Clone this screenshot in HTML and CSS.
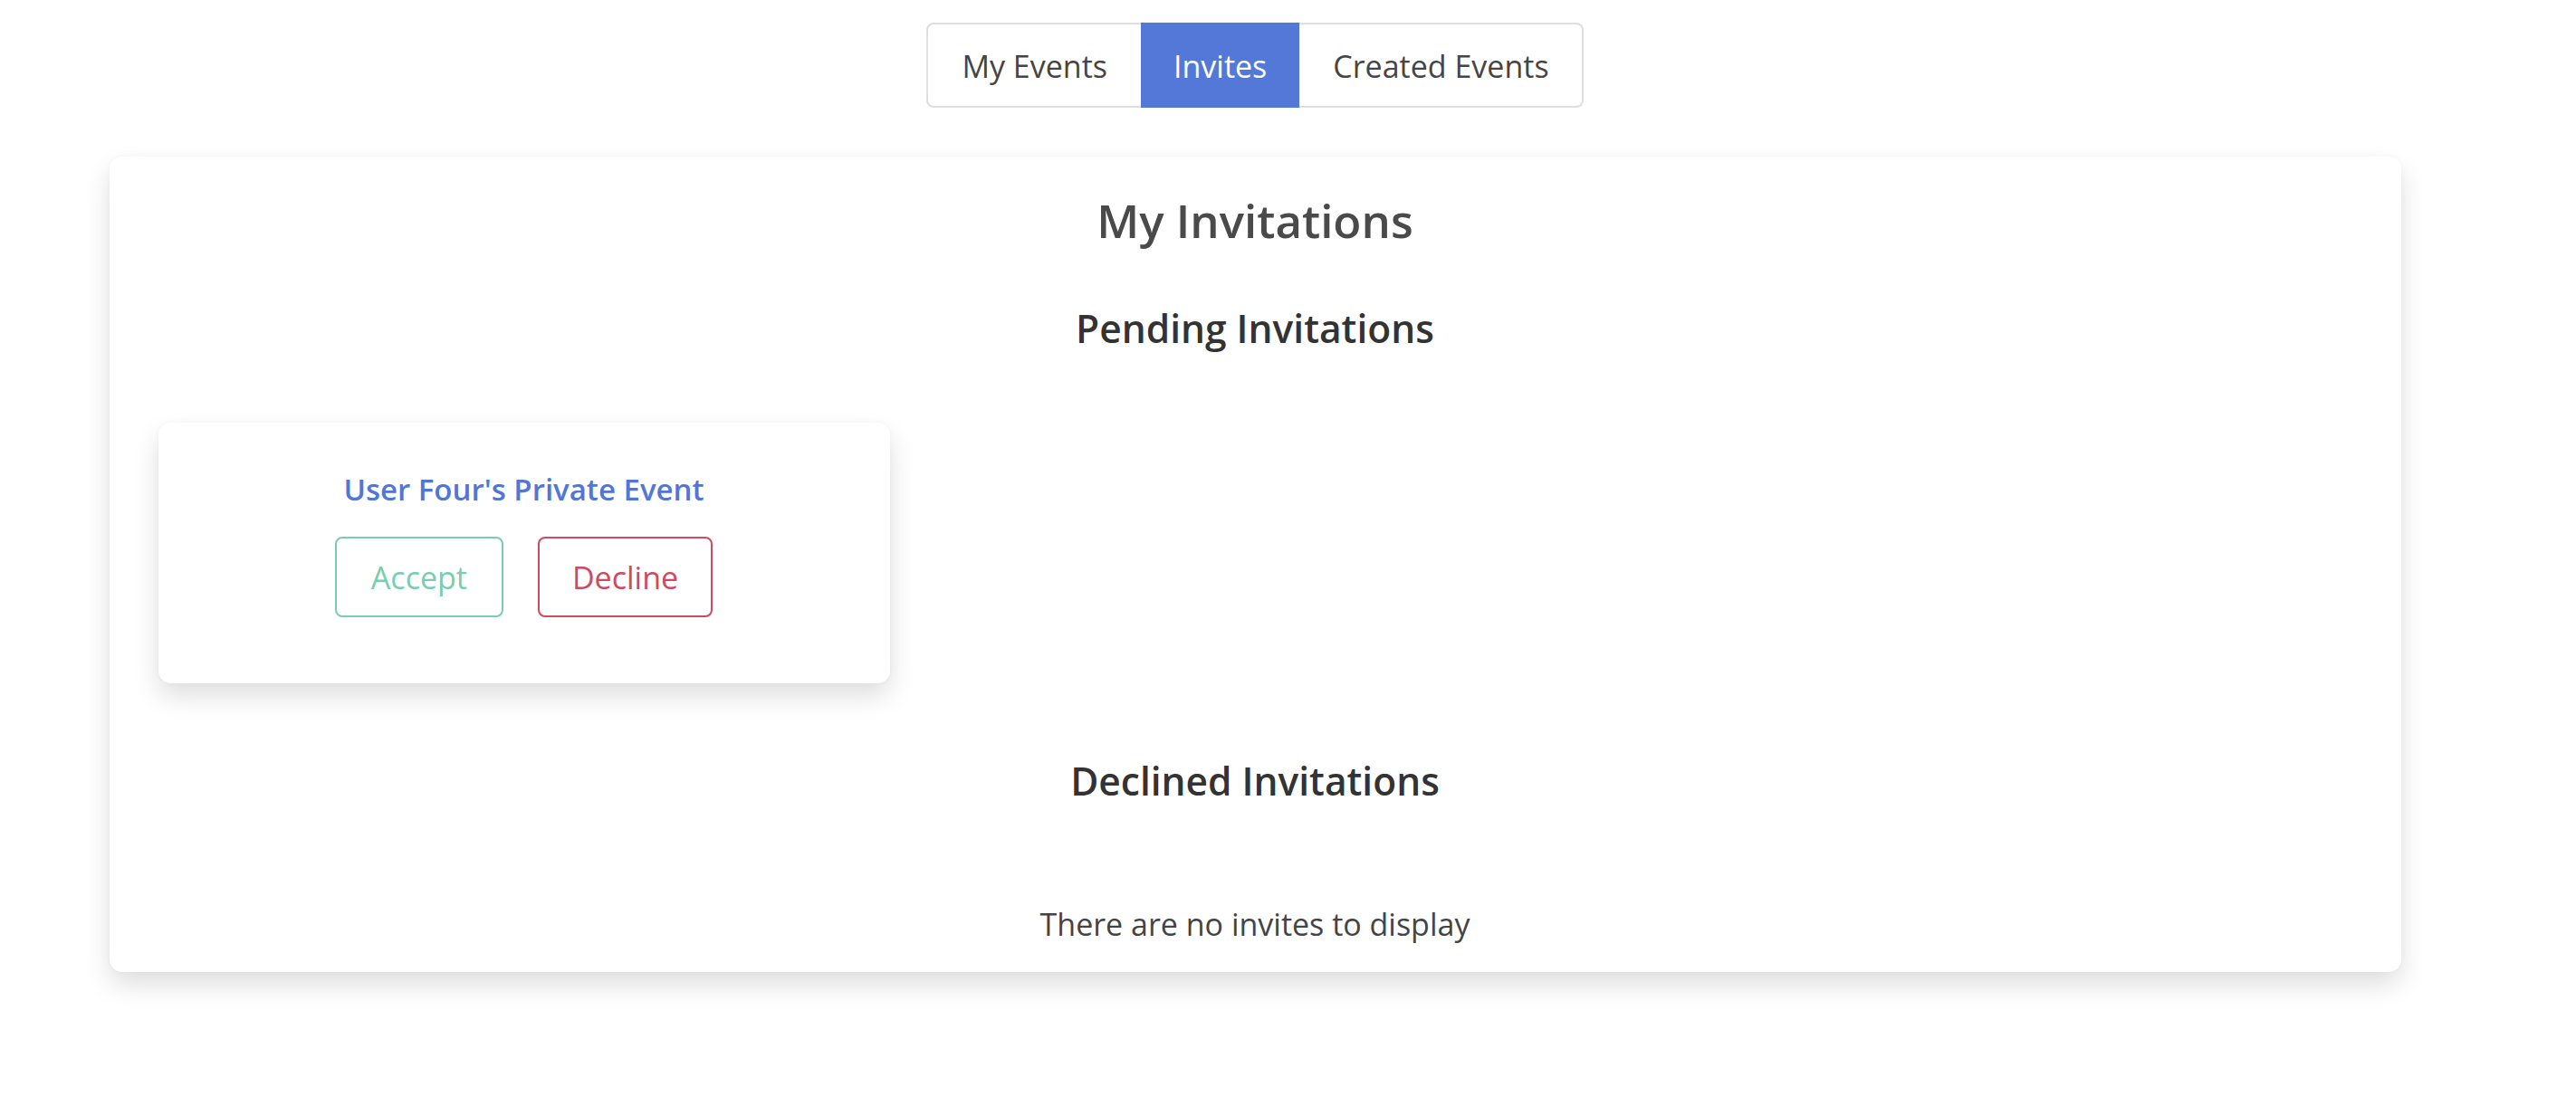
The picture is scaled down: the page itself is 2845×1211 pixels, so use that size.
FILE: index.html
```html
<!DOCTYPE html>
<html lang="en">
<head>
<meta charset="utf-8">
<title>My Invitations</title>
<link rel="stylesheet" href="styles.css">
</head>
<body>
<div class="page">
  <nav class="tabs">
    <button class="tab tab-first">My Events</button>
    <button class="tab tab-active">Invites</button>
    <button class="tab tab-last">Created Events</button>
  </nav>
  <main class="panel">
    <h1 class="panel-title">My Invitations</h1>
    <h2 class="section-title">Pending Invitations</h2>
    <div class="invite-list">
      <div class="invite-card">
        <div class="invite-name">User Four's Private Event</div>
        <div class="invite-actions">
          <button class="btn btn-accept">Accept</button>
          <button class="btn btn-decline">Decline</button>
        </div>
      </div>
    </div>
    <h2 class="section-title section-declined">Declined Invitations</h2>
    <p class="empty">There are no invites to display</p>
  </main>
</div>
</body>
</html>
```
FILE: styles.css
```css
* { box-sizing: border-box; }
html, body { margin: 0; padding: 0; background: #ffffff; }
body {
  font-family: "Open Sans", "Noto Sans", sans-serif;
  color: #444444;
}
.page {
  width: 2772px;
  padding-top: 25px;
  padding-bottom: 80px;
  display: flex;
  flex-direction: column;
  align-items: center;
}
.tabs {
  display: flex;
}
.tab {
  font-family: inherit;
  font-size: 34px;
  line-height: 50px;
  padding: 21px 37px 19px;
  color: #454545;
  background: #ffffff;
  border: 2px solid #dedede;
  border-left: none;
  border-right: none;
  margin: 0;
}
.tab-first {
  border-left: 2px solid #dedede;
  border-radius: 8px 0 0 8px;
}
.tab-last {
  border-right: 2px solid #dedede;
  border-radius: 0 8px 8px 0;
  padding-right: 36px;
}
.tab-active {
  background: #5478d7;
  border-color: #5478d7;
  color: #ffffff;
  padding: 21px 36px 19px;
}
.panel {
  width: 2531px;
  margin-top: 54px;
  background: #ffffff;
  border-radius: 14px;
  box-shadow: 0 14px 29px rgba(0, 0, 0, 0.13), 0 0 6px rgba(0, 0, 0, 0.03);
  padding: 38px 54px 27px;
  display: flex;
  flex-direction: column;
  align-items: center;
}
.panel-title {
  margin: 0;
  font-size: 51px;
  line-height: 64px;
  font-weight: 600;
  color: #4a4a4a;
}
.section-title {
  margin: 62px 0 0;
  font-size: 42.5px;
  line-height: 52px;
  font-weight: 600;
  color: #333333;
}
.section-declined {
  margin-top: 82px;
}
.invite-list {
  align-self: stretch;
  margin-top: 78px;
  display: flex;
}
.invite-card {
  width: 808px;
  background: #ffffff;
  border-radius: 14px;
  box-shadow: 0 14px 29px rgba(0, 0, 0, 0.13), 0 0 6px rgba(0, 0, 0, 0.03);
  padding: 54px 20px 73px;
  display: flex;
  flex-direction: column;
  align-items: center;
}
.invite-name {
  font-size: 33px;
  line-height: 40px;
  font-weight: 600;
  color: #5176d8;
}
.invite-actions {
  margin-top: 32px;
  display: flex;
  gap: 38px;
}
.btn {
  font-family: inherit;
  font-size: 34px;
  line-height: 53px;
  padding: 17px 38px 15px;
  background: #ffffff;
  border: 2px solid;
  border-radius: 8px;
}
.btn-accept {
  color: #79cdb0;
  border-color: #79cdb0;
}
.btn-decline {
  color: #cd4a60;
  border-color: #cd4a60;
  padding-left: 36px;
  padding-right: 36px;
}
.empty {
  margin: 106px 0 0;
  font-size: 34px;
  line-height: 52px;
  color: #444444;
}
```
